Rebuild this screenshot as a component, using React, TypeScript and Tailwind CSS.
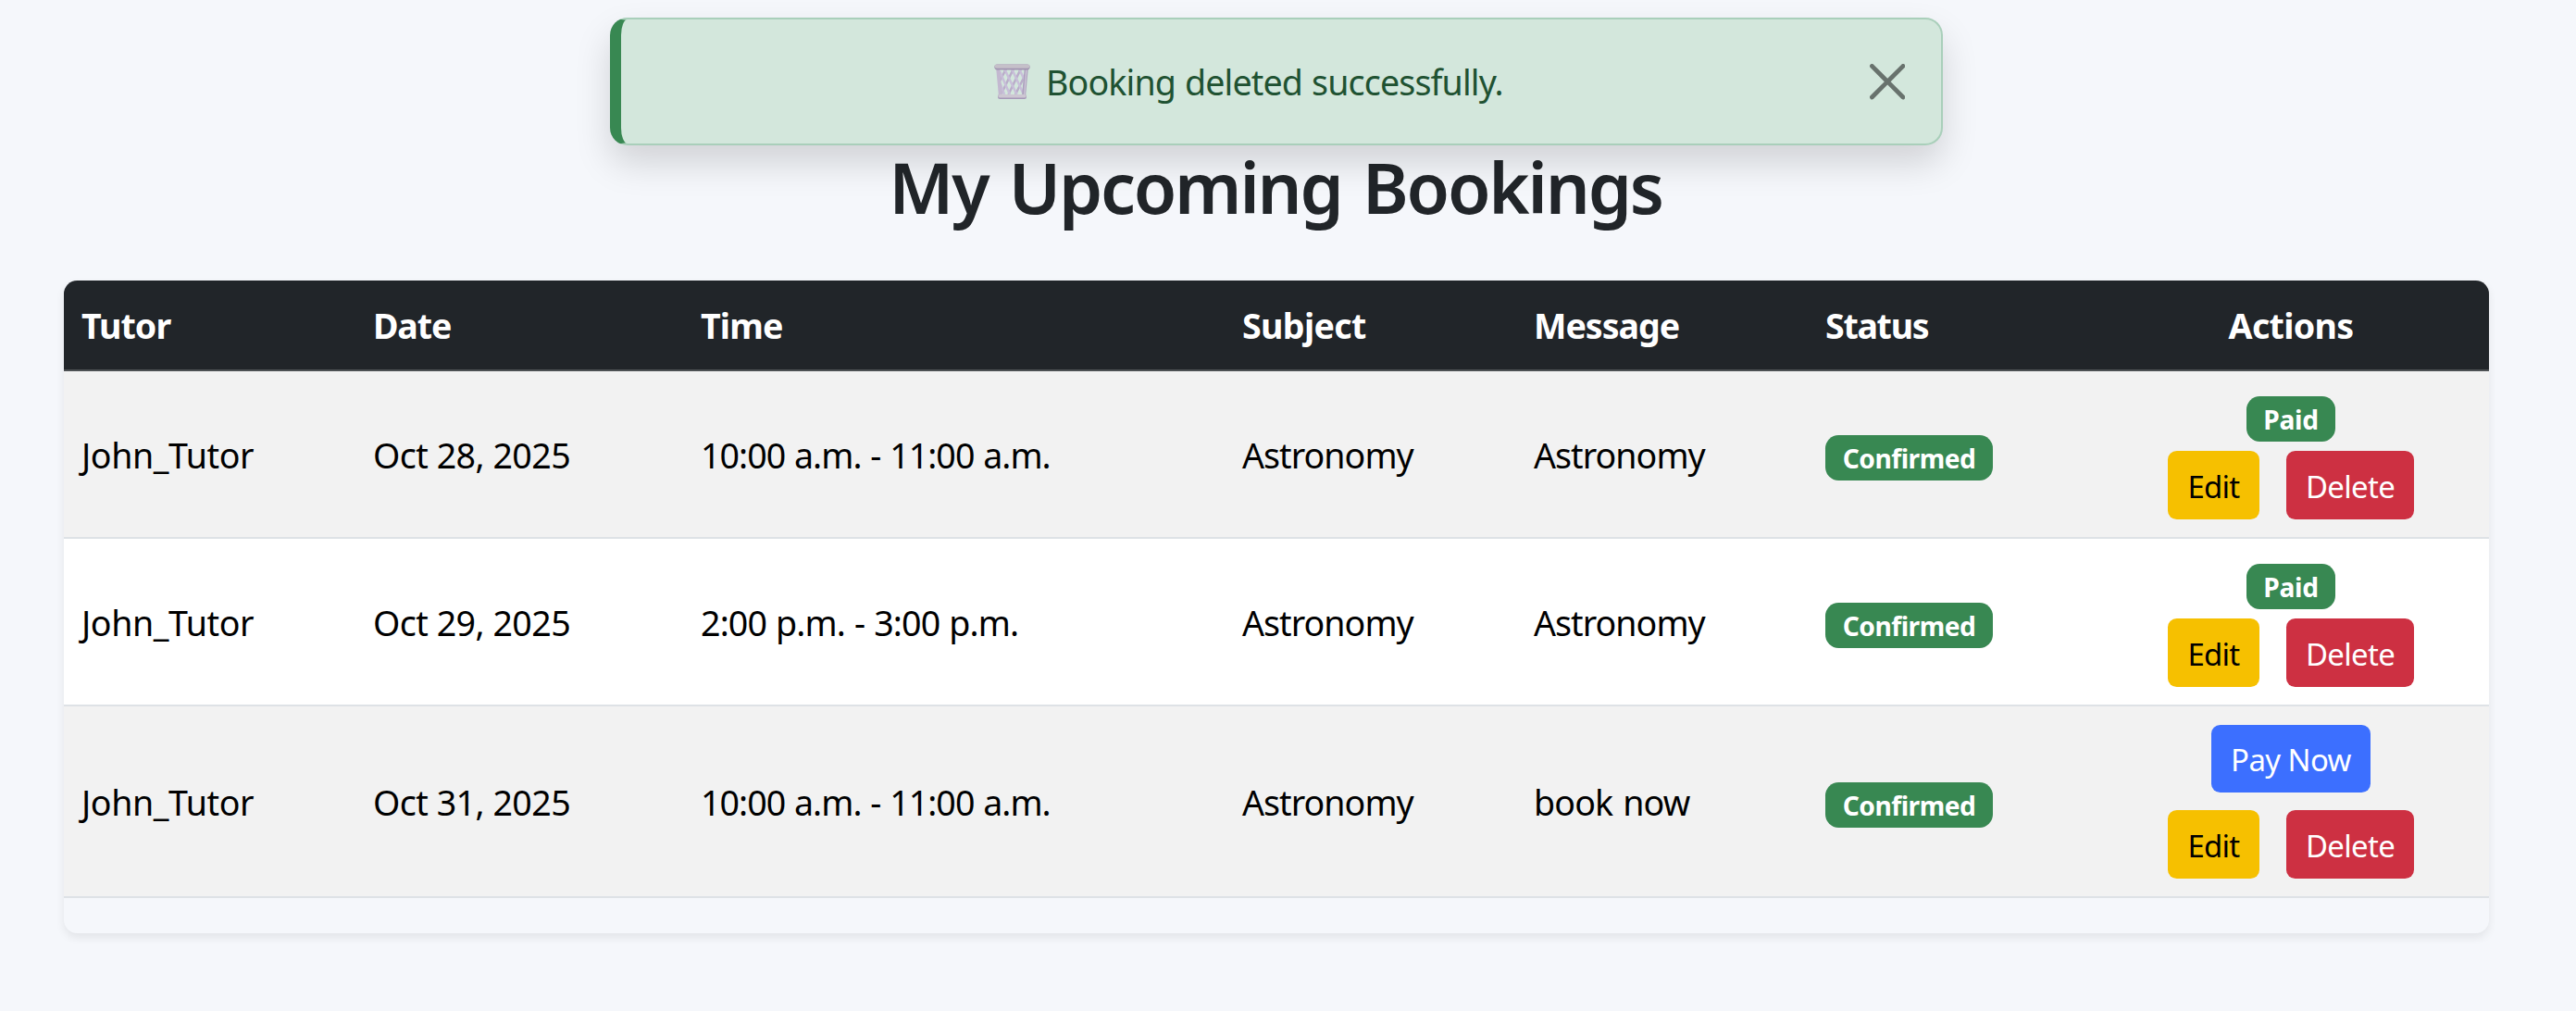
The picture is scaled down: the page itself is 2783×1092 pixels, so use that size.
type Booking = {
  tutor: string;
  date: string;
  time: string;
  timeSpacing: string;
  subject: string;
  message: string;
  messageSpacing: string;
  paid: boolean;
};

const bookings: Booking[] = [
  {
    tutor: "John_Tutor",
    date: "Oct 28, 2025",
    time: "10:00 a.m. - 11:00 a.m.",
    timeSpacing: "tracking-[-0.97px] [word-spacing:1px]",
    subject: "Astronomy",
    message: "Astronomy",
    messageSpacing: "tracking-[-0.95px]",
    paid: true,
  },
  {
    tutor: "John_Tutor",
    date: "Oct 29, 2025",
    time: "2:00 p.m. - 3:00 p.m.",
    timeSpacing: "tracking-[-0.85px] [word-spacing:1px]",
    subject: "Astronomy",
    message: "Astronomy",
    messageSpacing: "tracking-[-0.95px]",
    paid: true,
  },
  {
    tutor: "John_Tutor",
    date: "Oct 31, 2025",
    time: "10:00 a.m. - 11:00 a.m.",
    timeSpacing: "tracking-[-0.97px] [word-spacing:1px]",
    subject: "Astronomy",
    message: "book now",
    messageSpacing: "tracking-[-0.85px] [word-spacing:2px]",
    paid: false,
  },
];

const columns = [
  { label: "Tutor", width: "w-[315px]", text: "pl-[19px] text-left tracking-[-0.9px]" },
  { label: "Date", width: "w-[354px]", text: "pl-[19px] text-left tracking-[-1.15px]" },
  { label: "Time", width: "w-[585px]", text: "pl-[19px] text-left tracking-[-0.85px]" },
  { label: "Subject", width: "w-[315px]", text: "pl-[19px] text-left tracking-[-0.64px]" },
  { label: "Message", width: "w-[314px]", text: "pl-[19px] text-left tracking-[-1.02px]" },
  { label: "Status", width: "w-[309px]", text: "pl-[20px] text-left tracking-[-1.3px]" },
  { label: "Actions", width: "w-[428px]", text: "pl-0 text-center tracking-[-0.7px]" },
];

function TrashIcon() {
  return (
    <svg viewBox="0 0 39 39" className="h-[39px] w-[39px] shrink-0" aria-hidden="true">
      <g fill="none" strokeWidth="2.5">
        <path stroke="#b9adc9" d="M13 5 6.500 18M21 5 8 32M29 5 15.500 33M34 11 23 33" />
        <path stroke="#c8bed9" d="M6 8 17 33M11 5 24.500 33M19 5 31 31M27 5 33.500 19M6.500 21 11 33" />
      </g>
      <path d="M2.200 5h4l2.800 30H5z" fill="#c3b8d0" />
      <path d="M36.800 5h-4L30 35h4z" fill="#aca0bd" />
      <path d="M34.300 5h1.200l-2.300 29H32z" fill="#d2cbdc" />
      <rect x="4" y="33" width="31" height="5" rx="2.200" fill="#a698b8" />
      <rect x="4.300" y="33" width="30.400" height="3.600" rx="1.800" fill="#cdc7d2" />
      <rect x=".4" y=".6" width="38.200" height="5.800" rx="2.800" fill="#a093b0" />
      <rect x=".6" y=".4" width="37.800" height="4.400" rx="2.200" fill="#c5c0c9" />
    </svg>
  );
}

function SuccessAlert() {
  return (
    <div
      role="alert"
      className="absolute left-[659px] top-[19px] flex h-[138px] w-[1440px] items-center rounded-[19px] border-2 border-l-[12px] border-[#a9cfba] border-l-[#388852] bg-[#d3e7dc] pl-[403px] pr-[39px] pt-px text-[#1f5232] shadow-[0_19px_38px_rgba(0,0,0,0.15)]"
    >
      <TrashIcon />
      <span className="ml-[17px] whitespace-nowrap pt-px text-[37.6px] leading-[58px] tracking-[-0.85px] [word-spacing:1px]">
        Booking deleted successfully.
      </span>
      <button className="ml-auto opacity-50" aria-label="Close">
        <svg viewBox="0 0 16 16" className="h-[38.4px] w-[38.4px]" fill="#000">
          <path d="M.293.293a1 1 0 0 1 1.414 0L8 6.586 14.293.293a1 1 0 1 1 1.414 1.414L9.414 8l6.293 6.293a1 1 0 0 1-1.414 1.414L8 9.414l-6.293 6.293a1 1 0 0 1-1.414-1.414L6.586 8 .293 1.707a1 1 0 0 1 0-1.414z" />
        </svg>
      </button>
    </div>
  );
}

function Badge({ label, className }: { label: string; className: string }) {
  return (
    <span
      className={`flex h-[49px] items-center justify-center rounded-[14.4px] bg-[#388852] pt-px text-[28.2px] font-bold text-white ${className}`}
    >
      {label}
    </span>
  );
}

function RowActions({ paid }: { paid: boolean }) {
  const button =
    "flex h-[74px] items-center justify-center rounded-[9.6px] pt-[3px] text-[32.9px]";
  return (
    <div className={`flex flex-col items-center pb-[19px] ${paid ? "pt-[27px]" : "pt-[20px]"}`}>
      {paid ? (
        <Badge label="Paid" className="mb-[10px] w-[96px] tracking-[-0.3px]" />
      ) : (
        <button className="mb-[19px] flex h-[73px] w-[172px] items-center justify-center rounded-[9.6px] bg-[#3c6fff] pt-[3px] text-[32.9px] tracking-[-0.57px] text-white">
          Pay Now
        </button>
      )}
      <div className="flex gap-[29px]">
        <button className={`${button} w-[99px] bg-[#f6c000] tracking-[-0.77px] text-black`}>
          Edit
        </button>
        <button className={`${button} w-[138px] bg-[#cd3042] tracking-[-0.63px] text-white`}>
          Delete
        </button>
      </div>
    </div>
  );
}

export default function App() {
  const cell = "whitespace-nowrap pl-[19px] pt-[3px] align-middle";
  return (
    <div className="relative h-[1092px] w-[2783px] overflow-hidden bg-[#f5f7fb] px-[69px] pt-[156px] font-['Noto_Sans',sans-serif]">
      <h2 className="mb-[55px] w-[2620px] pr-[2px] text-center text-[75.5px] font-semibold leading-[92px] tracking-[-2.2px] text-[#212529] [word-spacing:5px]">
        My Upcoming Bookings
      </h2>
      <SuccessAlert />
      <div className="w-[2620px] overflow-hidden rounded-[14.4px] pb-[38px] shadow-[0_4.8px_9.6px_rgba(0,0,0,0.075)]">
        <table className="w-[2620px] table-fixed border-separate border-spacing-0 text-[37.6px] leading-[58px] text-black">
          <thead>
            <tr className="h-[98px] bg-[#212529] text-white">
              {columns.map((c) => (
                <th
                  key={c.label}
                  className={`border-b-2 border-[#4d5154] pb-0 pr-0 pt-[2px] align-middle font-bold ${c.width} ${c.text}`}
                >
                  {c.label}
                </th>
              ))}
            </tr>
          </thead>
          <tbody className="[&_td]:border-b-2 [&_td]:border-[#dee2e6]">
            {bookings.map((b) => (
              <tr key={b.date} className="odd:bg-[#f2f2f2] even:bg-white">
                <td className={`${cell} tracking-[-0.4px]`}>{b.tutor}</td>
                <td className={`${cell} tracking-[-0.52px]`}>{b.date}</td>
                <td className={`${cell} ${b.timeSpacing}`}>{b.time}</td>
                <td className={`${cell} tracking-[-0.95px]`}>{b.subject}</td>
                <td className={`${cell} ${b.messageSpacing}`}>{b.message}</td>
                <td className="pl-[20px] pt-[8px] align-middle">
                  <Badge label="Confirmed" className="w-[181px] tracking-[-0.5px]" />
                </td>
                <td className="p-0 align-top">
                  <RowActions paid={b.paid} />
                </td>
              </tr>
            ))}
          </tbody>
        </table>
      </div>
    </div>
  );
}
